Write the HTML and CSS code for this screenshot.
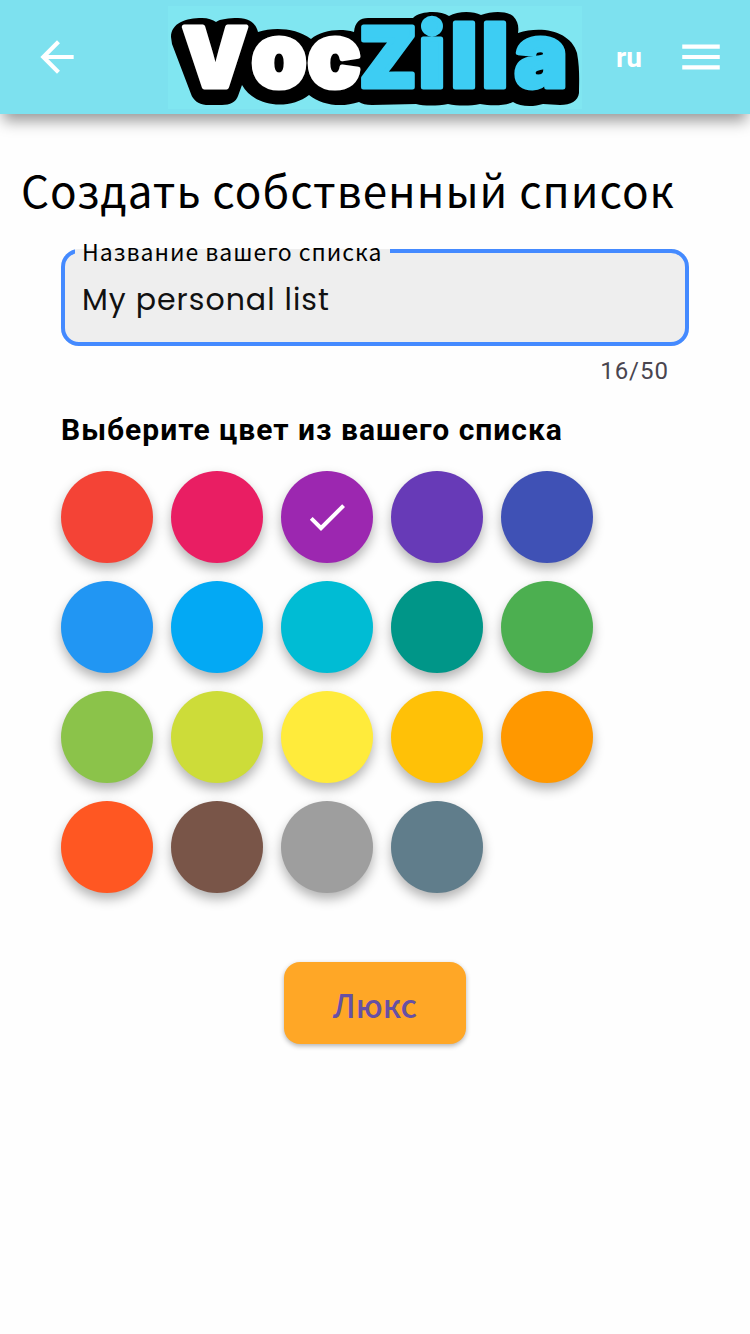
FILE: index.html
```html
<!DOCTYPE html>
<html lang="ru">
<head>
<meta charset="utf-8">
<meta name="viewport" content="width=device-width, initial-scale=1">
<title>VocZilla</title>
<link rel="stylesheet" href="styles.css">
</head>
<body>
<header class="topbar">
  <button class="icon-button back" type="button" aria-label="Назад">
    <svg class="icon" viewBox="0 0 24 24" aria-hidden="true"><path d="M20 11H7.83l5.59-5.59L12 4l-8 8 8 8 1.41-1.41L7.83 13H20v-2z"/></svg>
  </button>
  <svg class="logo" viewBox="168 5 414 103" role="img" aria-label="VocZilla">
    <rect class="logo-back" x="168" y="5" width="414" height="103"/>
    <path d="M171 36C171 22 186 17 202 17C208 17 213 19 216 21C220 18 229 17 238 17C250 17 256 23 258 31C274 26 296 27 311 38C322 29 340 27 354 31C355 21 360 17 368 17L413 17C420 10 440 9 449 15C458 10 473 10 481 14C492 10 507 10 513 15C518 20 519 26 518 32C543 24 571 31 577 52C580 68 579 82 579 92C578 100 571 104 560 104L543 103C534 106 520 106 513 101C505 105 491 105 480 103C470 105 458 105 448 103C437 105 424 105 416 103L372 104C366 104 362 103 359 101C341 107 321 104 309 94C290 109 255 107 242 84L238 95C236 101 230 104 222 104L206 104C198 103 193 99 191 93L172 43Z"/>
    <g class="logo-text">
      <text class="logo-cap logo-white" x="215" y="86">V</text>
      <text class="logo-white" y="86"><tspan x="279">o</tspan><tspan x="334">c</tspan></text>
      <text class="logo-cap logo-blue" x="388" y="86">Z</text>
      <text class="logo-blue" y="86"><tspan x="432">i</tspan><tspan x="464">l</tspan><tspan x="495">l</tspan><tspan x="541">a</tspan></text>
    </g>
  </svg>
  <div class="topbar-actions">
    <button class="lang" type="button">ru</button>
    <button class="icon-button" type="button" aria-label="Меню">
      <svg class="icon" viewBox="0 0 24 24" aria-hidden="true"><path d="M3 18h18v-2H3v2zm0-5h18v-2H3v2zm0-7v2h18V6H3z"/></svg>
    </button>
  </div>
</header>
<main>
  <h1 class="title">Создать собственный список</h1>
  <form class="form">
    <fieldset class="field">
      <legend class="field-legend"><label for="list-name">Название вашего списка</label></legend>
      <input class="field-input" id="list-name" type="text" maxlength="50" value="My personal list">
    </fieldset>
    <p class="counter">16/50</p>
    <h2 class="subtitle" id="colour-title">Выберите цвет из вашего списка</h2>
    <div class="swatches" role="radiogroup" aria-labelledby="colour-title">
      <label class="swatch"><input class="dot red" type="radio" name="colour" aria-label="Красный"></label>
      <label class="swatch"><input class="dot pink" type="radio" name="colour" aria-label="Розовый"></label>
      <label class="swatch"><input class="dot purple" type="radio" name="colour" aria-label="Пурпурный" checked>
        <svg class="check" viewBox="0 0 24 24" aria-hidden="true"><path d="M9 16.17L4.83 12l-1.42 1.41L9 19 21 7l-1.41-1.41z"/></svg></label>
      <label class="swatch"><input class="dot violet" type="radio" name="colour" aria-label="Фиолетовый"></label>
      <label class="swatch"><input class="dot indigo" type="radio" name="colour" aria-label="Индиго"></label>
      <label class="swatch"><input class="dot blue" type="radio" name="colour" aria-label="Синий"></label>
      <label class="swatch"><input class="dot sky" type="radio" name="colour" aria-label="Голубой"></label>
      <label class="swatch"><input class="dot cyan" type="radio" name="colour" aria-label="Циан"></label>
      <label class="swatch"><input class="dot teal" type="radio" name="colour" aria-label="Бирюзовый"></label>
      <label class="swatch"><input class="dot green" type="radio" name="colour" aria-label="Зелёный"></label>
      <label class="swatch"><input class="dot light-green" type="radio" name="colour" aria-label="Светло-зелёный"></label>
      <label class="swatch"><input class="dot lime" type="radio" name="colour" aria-label="Лайм"></label>
      <label class="swatch"><input class="dot yellow" type="radio" name="colour" aria-label="Жёлтый"></label>
      <label class="swatch"><input class="dot amber" type="radio" name="colour" aria-label="Янтарный"></label>
      <label class="swatch"><input class="dot orange" type="radio" name="colour" aria-label="Оранжевый"></label>
      <label class="swatch"><input class="dot deep-orange" type="radio" name="colour" aria-label="Тёмно-оранжевый"></label>
      <label class="swatch"><input class="dot brown" type="radio" name="colour" aria-label="Коричневый"></label>
      <label class="swatch"><input class="dot grey" type="radio" name="colour" aria-label="Серый"></label>
      <label class="swatch"><input class="dot blue-grey" type="radio" name="colour" aria-label="Серо-синий"></label>
    </div>
    <button class="submit" type="submit">Люкс</button>
  </form>
</main>
</body>
</html>
```
FILE: styles.css
```css
* { box-sizing: border-box; }

body {
  margin: 0;
  background: #fefefe;
  color: #000;
  font-family: Roboto, "Liberation Sans", sans-serif;
}

button { font: inherit; border: 0; cursor: pointer; }

.topbar {
  display: grid;
  grid-template-columns: 1fr auto 1fr;
  align-items: center;
  height: 114px;
  padding: 0 24px;
  background: #7de1ef;
  box-shadow: 0 10px 14px -3px rgba(0, 0, 0, 0.4);
}

.icon-button {
  display: flex;
  width: 50px;
  padding: 0;
  background: none;
}

.back { margin-left: 8px; }

.icon { width: 50px; height: 50px; fill: #fff; }

.logo { width: 414px; height: 103px; overflow: visible; }
.logo-back { fill: #80e6f1; }

.logo-text {
  font-family: Inter, sans-serif;
  font-size: 88px;
  font-weight: 900;
  text-anchor: middle;
  stroke-width: 5px;
  stroke-linejoin: round;
}

.logo-cap { font-size: 82px; }
.logo-white { fill: #fff; stroke: #fff; }
.logo-blue { fill: #3dcdf3; stroke: #3dcdf3; }

.topbar-actions {
  display: flex;
  align-items: center;
  justify-content: flex-end;
  gap: 34px;
}

.lang {
  padding: 0;
  background: none;
  color: #fff;
  font-size: 28px;
  font-weight: 700;
}

.title {
  margin: 39px 21px 0;
  font-family: "Noto Sans CJK SC", sans-serif;
  font-size: 44px;
  font-weight: 400;
  line-height: 72px;
  letter-spacing: 1px;
}

.form {
  display: flex;
  flex-direction: column;
  margin: 11px 61px 0;
}

.field {
  min-width: 0;
  margin: 0;
  padding: 14px 17px 22px;
  border: 4px solid #448aff;
  border-radius: 18px;
  background: #eee;
}

.field-legend {
  margin-left: -7px;
  padding: 0 8px 0 7px;
  font-family: "Noto Sans CJK SC", sans-serif;
  font-size: 23px;
  line-height: 30px;
  letter-spacing: 1px;
}

.field-input {
  display: block;
  width: 100%;
  height: 40px;
  padding: 0;
  border: 0;
  outline: 0;
  background: none;
  color: #111;
  font-family: Poppins, Inter, sans-serif;
  font-size: 30px;
  letter-spacing: 1px;
}

.counter {
  margin: 9px 20px 0;
  color: #49454f;
  font-size: 24px;
  line-height: 32px;
  letter-spacing: 1px;
  text-align: right;
}

.subtitle {
  margin: 25px 0 23px;
  font-size: 30px;
  font-weight: 700;
  line-height: 36px;
  letter-spacing: 1px;
}

.swatches { display: flex; flex-wrap: wrap; gap: 18px; }

.swatch { position: relative; width: 92px; height: 92px; }

.dot {
  appearance: none;
  display: block;
  width: 100%;
  height: 100%;
  margin: 0;
  border-radius: 50%;
  box-shadow: 0 6px 12px rgba(0, 0, 0, 0.3);
}

.check {
  position: absolute;
  inset: 22px;
  fill: #fff;
}

.red { background: #f44336; }
.pink { background: #e91e63; }
.purple { background: #9c27b0; }
.violet { background: #673ab7; }
.indigo { background: #3f51b5; }
.blue { background: #2196f3; }
.sky { background: #03a9f4; }
.cyan { background: #00bcd4; }
.teal { background: #009688; }
.green { background: #4caf50; }
.light-green { background: #8bc34a; }
.lime { background: #cddc39; }
.yellow { background: #ffeb3b; }
.amber { background: #ffc107; }
.orange { background: #ff9800; }
.deep-orange { background: #ff5722; }
.brown { background: #795548; }
.grey { background: #9e9e9e; }
.blue-grey { background: #607d8b; }

.submit {
  align-self: center;
  margin: 69px 0 32px;
  padding: 16px 49px 13px;
  border-radius: 16px;
  background: #ffa726;
  box-shadow: 0 2px 5px rgba(0, 0, 0, 0.3);
  color: #6750a4;
  font-family: "Noto Sans CJK SC", sans-serif;
  font-size: 32px;
  font-weight: 500;
  line-height: 53px;
}
```
